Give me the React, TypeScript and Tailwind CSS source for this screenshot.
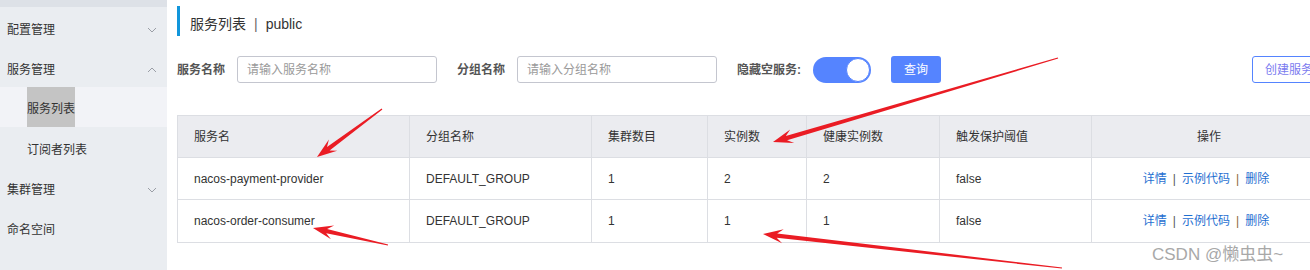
import React from "react";

const FONT = '"Liberation Sans", "Noto Sans CJK SC", sans-serif';

function Chevron({ up }: { up?: boolean }) {
  return (
    <svg width="10" height="6" viewBox="0 0 10 6" className="mr-[10px]">
      <polyline
        points={up ? "1,5 5,1 9,5" : "1,1 5,5 9,1"}
        fill="none"
        stroke="#9a9ea6"
        strokeWidth="1"
      />
    </svg>
  );
}

function Arrow({ x1, y1, x2, y2 }: { x1: number; y1: number; x2: number; y2: number }) {
  const dx = x2 - x1;
  const dy = y2 - y1;
  const L = Math.sqrt(dx * dx + dy * dy);
  const ux = dx / L;
  const uy = dy / L;
  const nx = -uy;
  const ny = ux;
  const p = (d: number, w: number) => `${(x1 + ux * d + nx * w).toFixed(1)},${(y1 + uy * d + ny * w).toFixed(1)}`;
  const headLen = 18;
  const neck = L - headLen + 4;
  const pts = [
    p(0, 0.6),
    p(neck, 2.2),
    p(L - headLen - 2, 7),
    p(L, 0),
    p(L - headLen - 2, -7),
    p(neck, -2.2),
    p(0, -0.6),
  ].join(" ");
  return <polygon points={pts} fill="#ea1c24" />;
}

const cols = [
  { w: 232, label: "服务名" },
  { w: 182, label: "分组名称" },
  { w: 116, label: "集群数目" },
  { w: 99, label: "实例数" },
  { w: 133, label: "健康实例数" },
  { w: 152, label: "触发保护阈值" },
  { w: 234, label: "操作", center: true },
];

const rows = [
  ["nacos-payment-provider", "DEFAULT_GROUP", "1", "2", "2", "false"],
  ["nacos-order-consumer", "DEFAULT_GROUP", "1", "1", "1", "false"],
];

export default function App() {
  return (
    <div
      className="relative w-[1310px] h-[270px] overflow-hidden flex bg-white text-[#333]"
      style={{ fontFamily: FONT }}
    >
      {/* Sidebar */}
      <div className="w-[167px] shrink-0 bg-[#eaedf1] flex flex-col">
        <div className="h-[7px] bg-[#dde1e7]" />
        <div className="h-[40px] flex items-center justify-between pl-[7px] text-[12px] pt-[5px]">
          <span>配置管理</span>
          <Chevron />
        </div>
        <div className="h-[40px] flex items-center justify-between pl-[7px] text-[12px] pt-[5px]">
          <span>服务管理</span>
          <Chevron up />
        </div>
        <div className="h-[40px] flex items-stretch bg-[#f2f3f7] pl-[27px] text-[12px]">
          <span className="bg-[#c4c4c4] flex items-center pt-[4px]">服务列表</span>
        </div>
        <div className="h-[40px] flex items-center pl-[27px] text-[12px] pt-[5px]">
          <span>订阅者列表</span>
        </div>
        <div className="h-[40px] flex items-center justify-between pl-[7px] text-[12px] pt-[5px]">
          <span>集群管理</span>
          <Chevron />
        </div>
        <div className="h-[40px] flex items-center pl-[7px] text-[12px] pt-[5px]">
          <span>命名空间</span>
        </div>
      </div>

      {/* Main */}
      <div className="flex-1 pl-[10px] overflow-hidden">
        <div className="mt-[6px] h-[30px] border-l-[3px] border-[#1296db] pl-[10px] flex items-center text-[14px] pt-[7px]">
          <span>服务列表</span>
          <span className="mx-[8px] text-[#666]">|</span>
          <span>public</span>
        </div>

        <div className="mt-[20px] h-[27px] flex items-center text-[12px]">
          <span className="shrink-0 font-bold text-[#555] w-[60px]">服务名称</span>
          <div className="shrink-0 w-[200px] h-[27px] border border-[#c4c6cf] rounded-[3px] flex items-center pl-[9px] text-[#9a9a9a]">
            请输入服务名称
          </div>
          <span className="shrink-0 font-bold text-[#555] ml-[20px] w-[60px]">分组名称</span>
          <div className="shrink-0 w-[200px] h-[27px] border border-[#c4c6cf] rounded-[3px] flex items-center pl-[9px] text-[#9a9a9a]">
            请输入分组名称
          </div>
          <span className="shrink-0 font-bold text-[#555] ml-[20px] w-[76px]">隐藏空服务:</span>
          <div className="shrink-0 w-[58px] h-[26px] rounded-full bg-[#5584ff] flex items-center justify-end pr-[1px]">
            <div className="w-[24px] h-[24px] rounded-full bg-white border border-[#5584ff]" />
          </div>
          <div className="shrink-0 ml-[20px] w-[50px] h-[27px] rounded-[3px] bg-[#5584ff] text-white flex items-center justify-center">
            查询
          </div>
          <div className="ml-[311px] shrink-0 w-[80px] h-[27px] rounded-[3px] border border-[#5584ff] text-[#7b7bef] flex items-center pl-[12px]">
            创建服务
          </div>
        </div>

        <div className="mt-[32px] w-[1148px] border border-[#dcdee3] text-[12px]">
          <div className="flex h-[42px] bg-[#ebecf0] border-b border-[#dcdee3]">
            {cols.map((c, i) => (
              <div
                key={i}
                className={`shrink-0 flex items-center ${i < cols.length - 1 ? "border-r border-[#dcdee3]" : ""} ${c.center ? "justify-center" : "pl-[16px]"}`}
                style={{ width: c.w }}
              >
                {c.label}
              </div>
            ))}
          </div>
          {rows.map((r, ri) => (
            <div key={ri} className={`flex h-[42px] ${ri === 0 ? "border-b border-[#dcdee3]" : ""}`}>
              {r.map((v, i) => (
                <div
                  key={i}
                  className="shrink-0 flex items-center pl-[16px] border-r border-[#dcdee3]"
                  style={{ width: cols[i].w }}
                >
                  {v}
                </div>
              ))}
              <div className="shrink-0 flex items-center justify-center text-[#1f6fd1] pr-[6px]" style={{ width: cols[6].w }}>
                <span>详情</span>
                <span className="mx-[6px] text-[#555]">|</span>
                <span>示例代码</span>
                <span className="mx-[6px] text-[#8a6a3a]">|</span>
                <span>删除</span>
              </div>
            </div>
          ))}
        </div>
      </div>

      {/* Annotations */}
      <svg className="absolute left-0 top-0 pointer-events-none" width="1310" height="270">
        <Arrow x1={382} y1={109} x2={317} y2={157} />
        <Arrow x1={1058} y1={58} x2={773} y2={142} />
        <Arrow x1={388} y1={245} x2={313} y2={228} />
        <Arrow x1={1062} y1={268} x2={763} y2={234} />
      </svg>
      <div
        className="absolute left-[1152px] top-[242px] text-[17px] text-[#a8a8a8] whitespace-nowrap"
        style={{ textShadow: "0 0 2px #fff" }}
      >
        CSDN @懒虫虫~
      </div>
    </div>
  );
}
